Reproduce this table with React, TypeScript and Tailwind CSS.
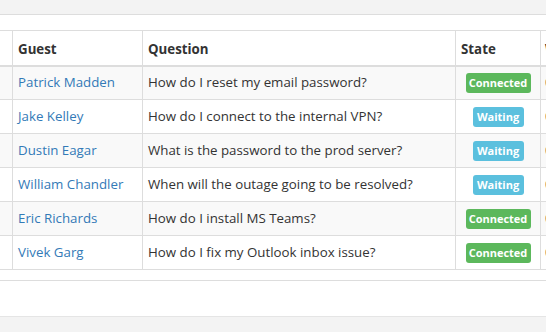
import React from 'react';

const rows = [
  { guest: 'Patrick Madden', question: 'How do I reset my email password?', state: 'Connected', wait: '00:04' },
  { guest: 'Jake Kelley', question: 'How do I connect to the internal VPN?', state: 'Waiting', wait: '00:12' },
  { guest: 'Dustin Eagar', question: 'What is the password to the prod server?', state: 'Waiting', wait: '00:09' },
  { guest: 'William Chandler', question: 'When will the outage going to be resolved?', state: 'Waiting', wait: '00:07' },
  { guest: 'Eric Richards', question: 'How do I install MS Teams?', state: 'Connected', wait: '00:03' },
  { guest: 'Vivek Garg', question: 'How do I fix my Outlook inbox issue?', state: 'Connected', wait: '00:02' },
];

const StateBadge = ({ state }: { state: string }) => (
  <span
    className={
      state === 'Connected'
        ? 'inline-block w-[65px] rounded-[3px] bg-[#5cb85c] py-[2px] text-center text-[11px] font-bold leading-[16px] text-white'
        : 'inline-block w-[51px] rounded-[3px] bg-[#5bc0de] py-[2px] text-center text-[11px] font-bold leading-[16px] text-white'
    }
  >
    {state}
  </span>
);

const App = () => {
  return (
    <div className="h-[332px] w-[546px] overflow-hidden bg-white font-['Segoe_UI','Open_Sans',sans-serif] text-[13.3px] text-[#333]">
      <div className="h-[15px] border-b border-[#ddd] bg-[#f3f3f3]" />
      <div className="pt-[15px]">
        <table className="-ml-[28px] w-[668px] table-fixed border-collapse border border-[#ddd]">
          <colgroup>
            <col className="w-[40px]" />
            <col className="w-[130px]" />
            <col className="w-[313px]" />
            <col className="w-[85px]" />
            <col className="w-[100px]" />
          </colgroup>
          <thead>
            <tr className="h-[35px] border-b-2 border-[#ddd]">
              <th className="border border-[#ddd]" />
              <th className="border border-[#ddd] px-[5px] pb-[5px] text-left align-bottom font-bold">Guest</th>
              <th className="border border-[#ddd] px-[5px] pb-[5px] text-left align-bottom font-bold">Question</th>
              <th className="border border-[#ddd] px-[5px] pb-[5px] text-left align-bottom font-bold">State</th>
              <th className="border border-[#ddd] px-[4px] pb-[5px] text-left align-bottom font-bold">Wait Time</th>
            </tr>
          </thead>
          <tbody>
            {rows.map((r, i) => (
              <tr key={r.guest} className={i % 2 === 0 ? 'h-[34px] bg-[#f9f9f9]' : 'h-[34px] bg-white'}>
                <td className="border border-[#ddd]" />
                <td className="border border-[#ddd] px-[5px] text-[#337ab7]">{r.guest}</td>
                <td className="border border-[#ddd] px-[5px]">{r.question}</td>
                <td className="border border-[#ddd] text-center">
                  <StateBadge state={r.state} />
                </td>
                <td className="border border-[#ddd] px-[4px]">{r.wait}</td>
              </tr>
            ))}
          </tbody>
        </table>
      </div>
      <div className="h-[10px]" />
      <div className="h-[36px] border-t border-[#ddd]" />
      <div className="h-[40px] border-t border-[#e5e5e5] bg-[#f3f3f3]" />
    </div>
  );
};

export default App;
